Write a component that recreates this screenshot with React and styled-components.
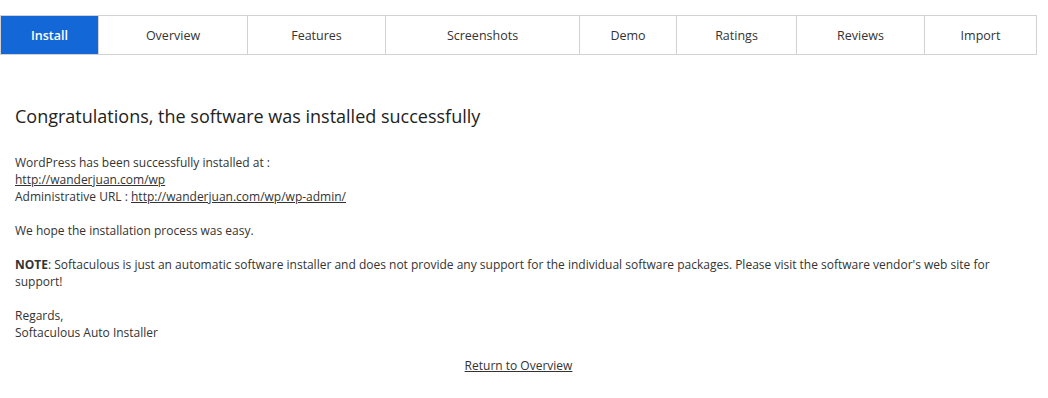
import React from "react";
import styled, { createGlobalStyle } from "styled-components";

const Global = createGlobalStyle`
  *, *::before, *::after { box-sizing: border-box; }
  html, body { margin: 0; padding: 0; background: #fff; }
  body { font-family: "Open Sans", "Liberation Sans", sans-serif; color: #333; }
`;

const Page = styled.div`
  width: 1037px;
  padding-top: 15px;
`;

const Tabs = styled.nav`
  display: flex;
  border: 1px solid #d2d2d2;
  height: 40px;
`;

const Tab = styled.a`
  flex: 0 0 ${(p) => p.$w}px;
  display: flex;
  align-items: center;
  justify-content: center;
  font-size: 12.5px;
  color: ${(p) => (p.$active ? "#fff" : "#333")};
  background: ${(p) => (p.$active ? "#1467d6" : "#fff")};
  border-left: ${(p) => (p.$first ? "none" : "1px solid #d2d2d2")};
  text-decoration: none;
  font-weight: ${(p) => (p.$active ? 600 : 400)};
  cursor: pointer;
`;

const Content = styled.div`
  padding: 0 15px;
`;

const Heading = styled.h2`
  margin: 48px 0 0;
  font-size: 18px;
  font-weight: 400;
  color: #222;
  line-height: 26px;
`;

const Body = styled.div`
  margin-top: 25px;
  font-size: 12px;
  line-height: 17px;
  color: #333;
`;

const Link = styled.a`
  color: #333;
  text-decoration: underline;
`;

const Footer = styled.div`
  text-align: center;
  margin-top: 16px;
  font-size: 12px;
  line-height: 17px;
`;

const Strong = styled.strong`
  font-weight: 700;
`;

const tabs = [
  ["Install", 97],
  ["Overview", 149],
  ["Features", 138],
  ["Screenshots", 194],
  ["Demo", 97],
  ["Ratings", 120],
  ["Reviews", 128],
  ["Import", 112],
];

export default function App() {
  return (
    <Page>
      <Global />
      <Tabs>
        {tabs.map(([label, w], i) => (
          <Tab key={label} $w={w} $active={i === 0} $first={i === 0}>
            {label}
          </Tab>
        ))}
      </Tabs>
      <Content>
        <Heading>Congratulations, the software was installed successfully</Heading>
        <Body>
          WordPress has been successfully installed at :<br />
          <Link href="#">http://wanderjuan.com/wp</Link>
          <br />
          Administrative URL : <Link href="#">http://wanderjuan.com/wp/wp-admin/</Link>
          <br />
          <br />
          We hope the installation process was easy.
          <br />
          <br />
          <Strong>NOTE</Strong>: Softaculous is just an automatic software installer and does not
          provide any support for the individual software packages. Please visit the software
          vendor's web site for support!
          <br />
          <br />
          Regards,
          <br />
          Softaculous Auto Installer
        </Body>
      </Content>
      <Footer>
        <Link href="#">Return to Overview</Link>
      </Footer>
    </Page>
  );
}
